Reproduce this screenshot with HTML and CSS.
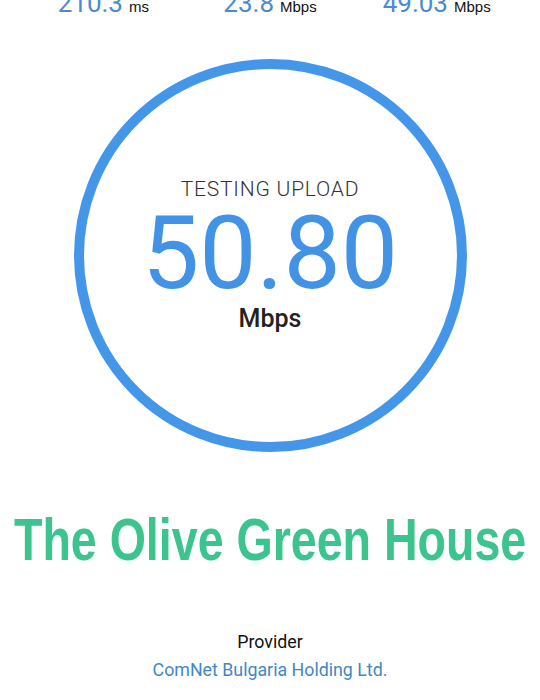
FILE: index.html
```html
<!DOCTYPE html>
<html lang="en">
<head>
    <meta charset="UTF-8">
    <meta name="viewport" content="width=device-width, initial-scale=1.0">
    <title>Speed Test</title>
    <link rel="stylesheet" href="styles.css">
</head>
<body>
    <div class="stats">
        <div class="stat"><span class="value">210.3</span><span class="unit">ms</span></div>
        <div class="stat"><span class="value">23.8</span><span class="unit">Mbps</span></div>
        <div class="stat"><span class="value">49.03</span><span class="unit">Mbps</span></div>
    </div>

    <div class="gauge">
        <div class="status">TESTING UPLOAD</div>
        <div class="speed">50.80</div>
        <div class="speed-unit">Mbps</div>
    </div>

    <div class="title-wrap">
        <h1 class="title">The Olive Green House</h1>
    </div>

    <div class="provider">
        <div class="provider-label">Provider</div>
        <div class="provider-name">ComNet Bulgaria Holding Ltd.</div>
    </div>
</body>
</html>
```

FILE: styles.css
```css
body {
    margin: 0;
    background: #fff;
    font-family: Roboto, "Liberation Sans", sans-serif;
    color: #111;
}

.stats {
    display: grid;
    grid-template-columns: repeat(3, 1fr);
    padding: 0 20px;
    margin-top: -12px;
    height: 30px;
    line-height: 30px;
}

.stat {
    display: flex;
    justify-content: center;
    align-items: baseline;
    gap: 6px;
}

.stat .value {
    font-size: 26px;
    color: #4a8bd0;
}

.stat .unit {
    font-family: "Liberation Sans", Arial, sans-serif;
    font-size: 15px;
    color: #111;
}

.gauge {
    width: 393px;
    height: 393px;
    box-sizing: border-box;
    margin: 41px auto 0;
    border: 10px solid #4496e9;
    border-radius: 50%;
    display: flex;
    flex-direction: column;
    align-items: center;
    padding-top: 108px;
}

.status {
    font-size: 21px;
    line-height: 25px;
    font-weight: 300;
    letter-spacing: 0.8px;
    color: #333;
}

.speed {
    font-size: 102px;
    line-height: 102px;
    color: #4293e6;
}

.speed-unit {
    font-size: 25px;
    line-height: 30px;
    font-weight: 500;
    color: #222;
}

.title-wrap {
    margin-top: 53px;
    display: flex;
    justify-content: center;
    overflow: hidden;
}

.title {
    flex: none;
    margin: 0;
    font-family: "Liberation Sans", Arial, sans-serif;
    font-size: 60px;
    line-height: 70px;
    font-weight: bold;
    color: #3cc48f;
    white-space: nowrap;
    transform: scaleX(0.776);
}

.provider {
    margin-top: 55px;
    text-align: center;
    font-size: 17.8px;
    line-height: 24px;
}

.provider-label {
    color: #111;
}

.provider-name {
    margin-top: 4px;
    color: #3f87c5;
}
```
